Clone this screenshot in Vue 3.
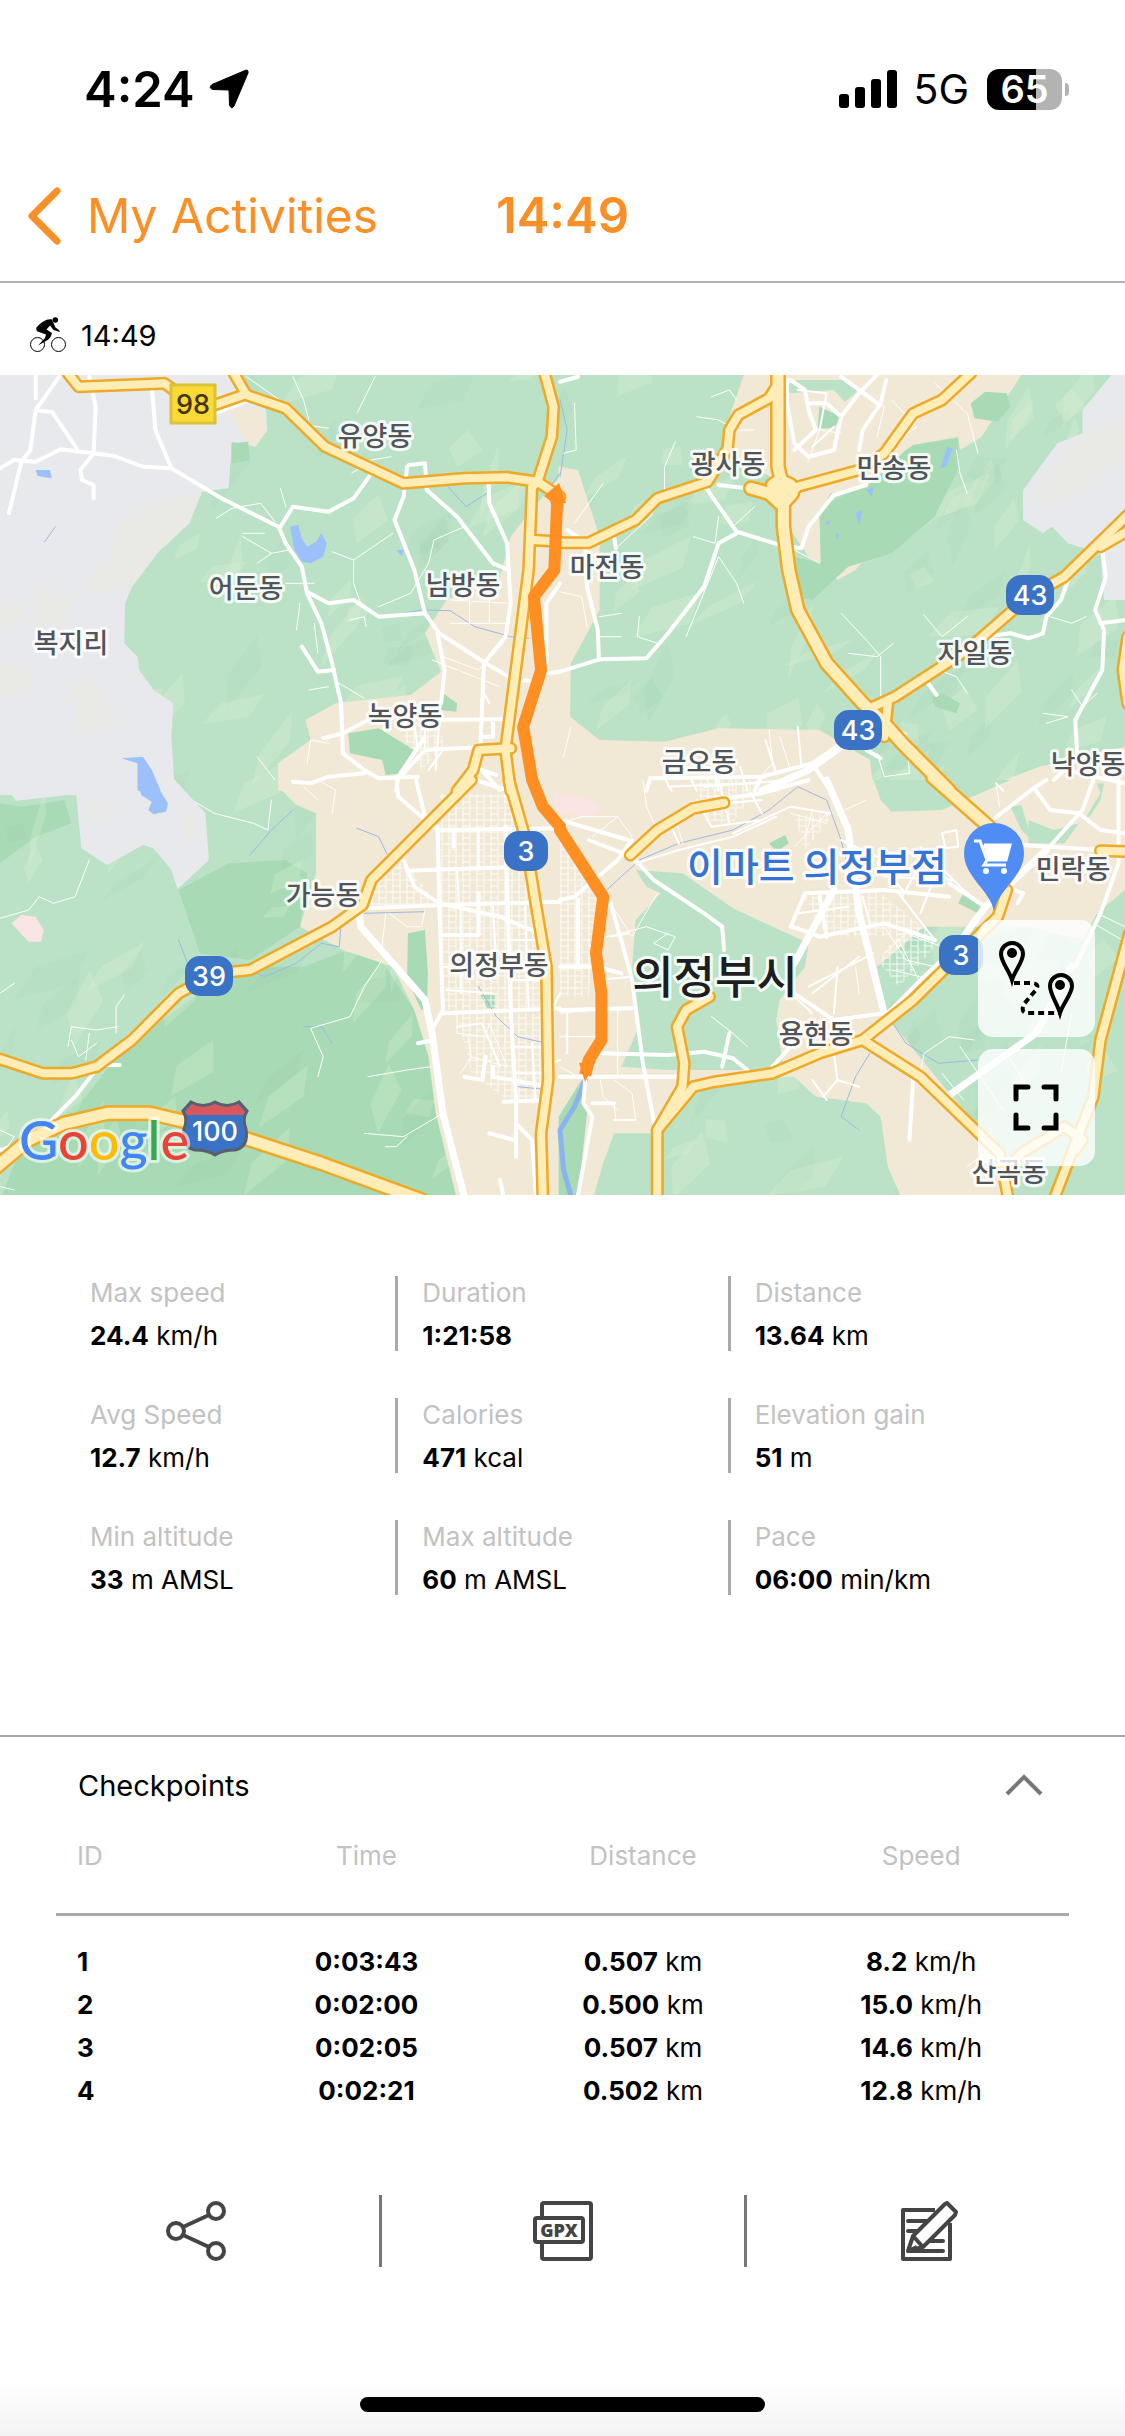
<script setup>
import { ref } from 'vue'

const open = ref(true)

const stats = [
  { label: 'Max speed', value: '24.4', unit: 'km/h' },
  { label: 'Duration', value: '1:21:58', unit: '' },
  { label: 'Distance', value: '13.64', unit: 'km' },
  { label: 'Avg Speed', value: '12.7', unit: 'km/h' },
  { label: 'Calories', value: '471', unit: 'kcal' },
  { label: 'Elevation gain', value: '51', unit: 'm' },
  { label: 'Min altitude', value: '33', unit: 'm AMSL' },
  { label: 'Max altitude', value: '60', unit: 'm AMSL' },
  { label: 'Pace', value: '06:00', unit: 'min/km' },
]

const checkpoints = [
  { id: 1, time: '0:03:43', distance: '0.507', speed: '8.2' },
  { id: 2, time: '0:02:00', distance: '0.500', speed: '15.0' },
  { id: 3, time: '0:02:05', distance: '0.507', speed: '14.6' },
  { id: 4, time: '0:02:21', distance: '0.502', speed: '12.8' },
]

// Map geometry is stored per tile; each tile has its own origin and scale.
const tiles = {
  nw: { x: 0, y: -5, sx: 2.8, sy: 3 },
  ne: { x: 560, y: -5, sx: 2.775, sy: 3 },
  sw: { x: 0, y: 405, sx: 2.8, sy: 3 },
  se: { x: 560, y: 405, sx: 2.775, sy: 3 },
}

function project(layer) {
  const out = []
  for (const key of Object.keys(layer)) {
    const t = tiles[key]
    for (const line of layer[key]) {
      const n = line.split(' ').map(Number)
      const pts = []
      for (let i = 0; i < n.length; i += 2) {
        pts.push((t.x + n[i] / t.sx).toFixed(1) + ',' + (t.y + n[i + 1] / t.sy).toFixed(1))
      }
      out.push(pts.join(' '))
    }
  }
  return out
}

const forest = project({
  sw: ['240 950 350 800 560 640 720 560 850 560 960 515 1060 530 1160 690 1200 800 1290 1260 0 1260 60 1100', '0 70 60 80 180 60 200 130 100 170 0 250', '500 330 640 250 800 240 860 280 840 440 700 540 560 520'],
})

const rock = project({
  nw: ['0 0 640 0 745 120 748 180 715 230 650 215 640 355 565 365 530 460 440 550 370 650 350 700 348 820 385 860 390 900 430 960 485 1000 480 1100 490 1275 0 1275'],
  sw: ['0 0 490 0 575 100 585 240 497 328 480 270 430 205 400 195 300 255 228 205 213 42 45 62'],
  ne: ['1568 15 1530 15 1450 120 1450 190 1380 220 1285 360 1285 450 1340 490 1365 470 1410 520 1500 550 1510 690 1568 690'],
})

const rockShade = project({
  nw: ['565 365 530 460 440 550 370 650 300 670 230 660 300 560 340 450 420 400', '0 880 90 890 90 970 0 980', '100 640 200 690 180 760 90 770', '200 940 260 920 330 1060 220 1100', '0 700 60 690 70 740 0 780'],
  ne: ['1450 190 1568 150 1568 260 1400 400 1300 400'],
  sw: ['500 60 560 140 520 210', '240 60 330 80 260 130'],
})

const town = project({
  nw: ['1568 1262 780 1262 778 1180 870 1110 855 1050 940 1000 1150 975 1235 905 1190 790 1250 690 1400 620 1430 500 1480 430 1568 320', '640 120 730 110 748 180 715 230 690 215'],
  sw: ['778 0 1570 0 1570 1260 1280 1260 1220 1000 1200 830 1160 690 1100 560 960 510 840 440 885 280 885 100 830 75 780 20'],
  ne: ['0 290 50 300 110 500 110 720 30 880 28 1040 110 1110 290 1115 440 1075 720 1080 860 1170 870 1262 -4 1262 -4 290', '510 15 1280 15 1170 200 1110 240 1105 200 980 225 850 350 750 370 720 440 724 580 690 560 640 480 600 330 450 240 470 140', '1160 1262 1330 1190 1568 1130 1568 1262', '755 610 790 580 850 560 820 600 770 630'],
  se: ['-4 0 1568 0 1568 330 1490 400 1450 480 1300 440 1010 440 880 560 900 700 930 740 1080 940 1250 1200 1240 1260 950 1260 910 1160 890 1010 850 970 710 950 650 890 400 900 270 1060 150 1060 120 1150 90 1260 -4 1260'],
})

const park = project({
  ne: ['620 50 660 30 800 30 825 65 790 95 760 60 640 70'],
  se: ['210 270 340 280 480 385 690 490 680 560 610 660 600 720 620 860 560 870 300 870 170 860 215 750 200 560 210 420 280 340 240 320', '870 0 890 60 920 95 1060 90 1250 0', '1300 120 1370 150 1440 130 1400 190 1300 190', '1250 80 1280 75 1310 180 1280 150', '1460 110 1500 40 1490 10 1510 10 1500 60 1470 110'],
})

const grove = project({
  nw: ['975 1090 1060 1075 1160 1140 1130 1210 1080 1215 1070 1170 980 1150', '648 220 695 215 700 270 650 280', '1240 970 1280 1000 1278 1025 1235 1020'],
  ne: ['980 225 1105 205 1108 290 1040 440 920 550 800 590 700 690 660 680 650 560 724 580 720 420 760 390 860 340 960 240', '1140 100 1180 65 1240 70 1250 110 1215 155 1150 145', '720 110 780 140 760 175 715 175', '1030 980 1060 970 1110 1000 1100 1030 1040 1010'],
  sw: ['1142 460 1190 450 1198 580 1195 690 1180 690 1140 600', '1345 645 1385 645 1385 685 1365 685'],
  se: ['-4 1010 60 900 75 1000 50 1250 -4 1250', '580 190 625 165 635 190 600 215', '1120 340 1170 370 1160 400 1105 370'],
})

const blush = project({
  sw: ['32 430 60 405 100 410 122 450 115 485 80 485'],
  se: ['-20 40 70 50 110 80 90 110 -10 100'],
})

const water = project({
  nw: ['812 470 835 465 845 505 860 530 885 515 900 490 915 520 905 560 870 580 845 575 825 540', '340 1165 400 1160 425 1200 450 1262 385 1262 385 1180', '100 300 140 300 145 325 105 318', '1110 540 1130 540 1125 560'],
  sw: ['385 0 430 0 470 70 465 95 430 103 415 90 425 65 395 45'],
  ne: ['1075 230 1090 235 1070 290 1055 295', '820 430 840 420 830 465', '765 490 775 490 770 510', '850 360 870 350 865 380', '735 460 750 450 745 465', '925 340 910 365 920 350'],
})

const streams = project({
  nw: ['1255 350 1305 410 1370 365', '1080 740 1180 720 1260 722 1330 770 1430 800 1480 805', '1568 310 1540 350', '125 515 155 470'],
  ne: ['0 90 20 180 0 320'],
  sw: ['1000 145 1060 170 1085 225', '955 430 950 500 900 490 830 550 740 590 680 560', '500 480 525 550', '1340 620 1390 710 1450 770 1530 790', '700 225 760 150 820 90', '850 740 900 740 930 790', '1450 920 1540 930', '1190 395 1020 400'],
  se: ['130 330 220 240 330 190 480 150 580 90 660 20 740 60 780 180 830 400 870 560 900 690 960 790 1050 850 1160 840', '860 820 820 890 780 1010 830 1050'],
})

const canal = project({
  se: ['70 900 40 980 0 1050 10 1170 30 1245'],
})

const lanes = project({
  nw: ['690 20 790 95 860 165 920 175', '820 20 850 90 865 150', '1050 20 1000 130', '605 445 650 415 730 400 770 455', '785 355 800 410', '680 490 740 490', '680 500 760 550 720 580', '760 550 810 540', '930 545 990 570 990 640 1010 700', '990 570 1100 490', '800 640 880 640', '840 700 830 780', '880 760 890 850', '950 940 1020 985', '865 960 920 950', '1300 470 1215 510 1200 580 1150 670 1060 710', '985 310 1040 270 1095 260', '1240 860 1340 900 1410 820', '1260 690 1425 700', '1260 760 1425 760', '1315 680 1315 760', '1370 690 1370 760', '1210 870 1400 950', '980 750 1020 740 1025 770', '720 1160 770 1230', '860 1180 870 1110 920 1120'],
  ne: ['290 370 290 290 320 215', '160 530 250 440 260 420', '380 140 440 150 490 180 540 180', '420 80 470 60 490 90', '350 800 440 560 490 640 510 700', '370 500 430 520 440 440', '780 730 850 810 890 860 890 990', '800 850 880 860 925 820', '1010 735 1060 800 1130 740', '1360 740 1420 760 1460 740', '1050 900 1100 920 1130 970', '110 740 170 730', '105 800 170 800', '220 740 215 800 270 820', '0 665 60 680 75 770', '690 270 720 180 780 190', '840 60 900 110 880 200', '920 90 990 170 950 200', '1040 40 1090 90 1130 130 1160 250', '1100 240 1110 310 1130 370', '1420 960 1450 1010 1490 970', '1340 1030 1410 1040 1350 1060', '900 1070 960 1090 970 1210 900 1220 880 1150', '580 1080 590 1180 540 1240', '610 1100 640 1200', '470 1200 480 1262', '400 1220 430 1262', '10 1160 30 1070', '650 540 720 580', '540 410 510 440 480 470', '10 250 45 240 40 100', '40 460 120 340'],
  sw: ['0 415 80 390 110 350 150 370 210 350 250 240', '545 65 600 100 710 130 750 150 760 60', '325 760 325 680 348 645', '190 800 200 740 270 750 330 740', '200 780 220 830 270 790', '240 840 250 760', '0 640 40 610', '1070 540 1020 620 980 710 870 745 905 830 890 890', '1205 860 1140 870 1030 890', '1240 1000 1130 1070 1020 1060', '1140 1070 1110 1100 1080 1100', '890 0 940 30 930 100', '850 20 890 60', '1080 400 1070 500', '1190 390 1180 440 1140 440 1090 400', '1250 630 1380 640', '1280 700 1280 760 1360 770 1370 730 1420 860 1320 830 1290 880', '1320 830 1310 770', '0 1050 40 1070 20 1100', '0 1220 40 1230'],
  se: ['420 710 480 760 520 800', '0 130 60 110 160 110 200 170', '90 170 160 110', '230 0 240 80 270 150', '320 110 340 190', '0 770 110 770', '0 700 200 680', '0 860 50 890', '160 680 160 890', '140 370 200 470 270 340', '130 470 240 440 320 470 300 510 260 490 300 460', '750 90 650 200', '640 100 740 130', '700 90 680 180', '820 560 830 640', '900 440 960 540 1040 560', '900 520 960 460 1060 500', '920 570 1000 590', '940 480 1000 610', '1210 10 1220 80', '1000 880 1010 820 1080 770 1150 780', '1060 880 1120 960', '1110 800 1230 990', '150 970 155 1020 210 1020 200 940 150 900', '110 890 120 950 160 990', '1240 820 1290 910', '1420 700 1390 880', '1130 1160 1200 1100', '1480 430 1560 480', '1490 400 1568 440', '790 90 850 60'],
})

const streets = project({
  nw: ['0 295 40 270 100 275 170 238 260 250 320 258 400 290 480 295 620 385 780 470 800 520 845 590 860 670 900 760 930 880 955 1000 960 1150 1020 1200 1060 1225 1170 1220', '170 14 100 120 85 240 60 275 25 430', '100 14 100 85', '250 20 268 110 262 250 225 300 230 330 262 345 262 385', '425 50 435 180 480 295', '105 122 145 125 215 235', '600 130 700 90', '1040 310 990 385 920 425 820 410 785 470', '860 665 920 700 990 690 1060 740 1190 730', '1145 285 1190 280 1195 360 1280 440 1380 580 1425 600', '1140 290 1130 380 1105 450 1160 600 1190 730 1230 790 1360 880 1440 930 1480 932', '1368 340 1370 400 1420 520 1430 700 1415 800 1355 880 1345 1130', '1225 790 1245 900 1235 1000', '845 830 890 905 935 900', '905 1105 960 1090 1040 1045', '820 1235 870 1240 920 1220 1020 1210', '1180 1050 1415 1048', '1130 1210 1190 1140 1340 1132', '1340 1190 1400 1260', '1345 1200 1390 1215', '1110 1262 1115 1220 1190 1100', '1568 640 1530 700 1530 900', '1380 1060 1380 1100 1345 1100', '1530 910 1568 905'],
  sw: ['1020 385 1240 375 1568 365', '1225 140 1230 370 1240 690 1215 740', '1110 0 1115 50 1225 150 1568 145', '1140 272 1420 262', '1415 140 1430 690 1445 960 1445 1130', '1240 700 1568 685', '1130 240 1160 320 1230 370 1400 410 1510 460', '1165 0 1190 110', '1240 465 1340 465 1340 340', '1410 965 1540 960', '0 1110 70 1090', '145 1020 210 950 280 855 335 855', '1170 790 1215 780', '1445 1030 1490 1080 1500 1240', '1370 1060 1440 1080', '1300 890 1350 900 1360 830', '1330 0 1420 30', '1270 150 1270 200', '1380 860 1380 890 1540 920', '1400 1200 1410 1250'],
  ne: ['400 345 490 485 610 525 670 535 690 470 760 375 850 345', '440 345 600 365', '490 490 440 520 400 650 300 790 240 865 110 868 0 905', '70 530 75 650 105 780 108 865', '20 480 70 515', '150 500 155 535', '630 30 630 100 650 220 690 260 760 240 780 140 830 70 880 14', '905 30 890 100 840 180 830 240', '690 100 740 100 780 140', '640 30 680 60 690 120 710 180 650 240', '780 20 880 100', '1505 540 1515 620 1485 720 1510 780 1505 900 1430 1050 1435 1150', '1500 760 1568 750', '1410 630 1390 690 1350 740 1340 790 1300 805 1250 790 1180 800', '780 1120 700 1180 560 1220 250 1225 240 1262', '1015 930 1045 975', '0 35 50 20', '850 1140 890 1165', '700 1180 750 1262', '560 1220 540 1262', '1370 1230 1400 1200 1568 1240'],
  se: ['0 360 40 350 160 240 200 180', '80 180 200 230 260 300 400 400 450 440 455 510', '140 370 170 480 200 600 230 850 265 1050', '370 70 560 40 690 0', '0 890 350 890', '110 820 300 825 400 815 480 835 520 870', '0 560 100 560 170 580', '0 690 200 685', '650 640 760 720 900 700', '1280 195 1500 210', '1350 210 1450 90 1480 0', '1200 120 1320 20 1350 0', '1320 30 1360 90 1440 100 1500 150 1568 160', '1550 0 1550 250 1500 400 1430 560', '640 440 680 340 900 330 1080 350', '645 440 720 470 900 430 1040 480', '720 350 740 470', '980 890 970 1080', '70 900 65 970 90 1010 50 1245', '90 970 150 970', '590 860 640 800', '450 860 470 760', '1080 310 1180 380 1150 420', '190 180 0 120', '900 710 1010 590 1100 500', '50 360 50 560', '1260 330 1285 340 1270 370'],
})

// Secondary town streets, thinner than the through streets.
const blocks = project({
  se: ['380 60 420 140 560 120', '440 0 470 130', '530 40 560 100', '400 20 640 0', '460 70 560 60', '480 160 640 80 750 100', '300 120 330 190', '210 250 330 210 480 170 600 110', '880 250 960 340', '1000 250 950 350', '1040 290 1000 400', '900 290 1090 300', '700 640 830 530', '690 620 870 520', '770 560 760 700', '700 900 740 960', '760 820 770 900 730 950', '770 900 830 920', '840 350 860 430', '660 400 800 380', '780 180 900 240 960 210 1080 300', '1000 200 1120 330 1180 380', '1060 160 1100 150 1105 200 1070 205 1060 160', '600 590 640 640 700 700', '20 700 20 820', '100 600 200 590', '190 460 140 470', '210 1020 150 1020', '940 340 1040 480'],
  sw: ['1250 630 1380 640', '1240 560 1420 560', '1290 380 1290 640', '1380 380 1390 560', '1340 150 1340 265', '1430 480 1530 480', '1430 600 1530 600', '1430 800 1530 800', '1440 880 1530 880', '1490 790 1500 960', '1470 380 1480 680', '1280 740 1350 730 1400 860', '1540 700 1568 640', '1540 850 1568 840', '1280 270 1285 370'],
  nw: ['1190 1050 1190 1140', '1230 1050 1220 1200', '1160 1060 1170 1140', '1350 960 1370 1000', '1200 1200 1240 1140'],
  ne: ['290 1225 310 1262', '360 1220 380 1262', '420 1170 440 1262', '500 1190 520 1262', '300 1250 520 1240', '570 1110 600 1210', '660 1070 670 1190', '660 60 740 70 720 180', '700 230 760 170', '1230 1262 1210 1240', '1480 1230 1470 1262'],
})

const avenues = project({
  sw: ['1005 385 1010 440 1100 550 1190 660 1210 760 1240 1000 1300 1250'],
  ne: ['800 1115 690 1200 560 1262'],
  se: ['740 0 800 150 830 400 900 700', '1075 950 1320 760 1420 560', '1120 470 1180 380 1350 210', '650 550 760 330'],
})

const highways = project({
  nw: ['190 10 220 50 420 42 460 40 500 70', '600 105 690 72', '655 10 690 75 800 115 910 230 1130 340 1300 325 1420 322 1505 335 1568 380', '1525 10 1550 110 1545 200 1505 335 1490 350 1480 600 1450 850 1415 1140 1430 1262', '1495 510 1568 515', '1430 1135 1340 1140 1325 1200 1280 1262'],
  sw: ['1320 0 1040 300 1015 375 930 440 700 570 650 575 570 600 500 640 370 780 270 860 200 880 120 880 -20 830', '1425 0 1470 170 1500 370 1530 560 1535 900 1515 1060 1520 1260'],
  ne: ['-10 518 80 518 210 450 270 385 410 335 465 235 470 180 495 135 580 85 600 50', '640 370 660 350 830 300 900 250 980 130 1060 90 1140 10', '870 1010 930 980 1130 840 1300 680 1400 620 1580 430', '1500 530 1580 480', '900 1100 910 1000', '1575 800 1562 900 1575 1000'],
  se: ['1240 330 1215 410 1130 500 980 660 840 780 720 820 590 880 430 905 370 920 270 1050 270 1260', '415 650 350 690 325 740 345 850 340 920 270 1050', '840 780 1000 890 1220 1120 1245 1260', '195 225 270 150 370 85 455 68', '1500 212 1580 215', '1580 460 1500 780 1480 950 1370 1260', '1230 1180 1280 1120 1400 1040 1450 1080 1430 1110'],
})

const expressway = project({
  ne: ['605 10 605 290 620 360 620 470 635 600 660 720 740 880 840 1000 900 1060 950 1120 1080 1262', '530 355 580 370 610 400', '610 330 590 345 600 375 620 400 645 370 640 345 610 330'],
  sw: ['-20 1170 80 1080 180 1030 300 1000 420 1000 600 1045 900 1150 1180 1260'],
  se: ['1035 -8 1190 140'],
})

const route = project({
  nw: ['1552 370 1560 400 1552 600 1495 680 1515 900 1465 1070 1490 1230'],
  sw: ['1490 0 1520 80 1568 140'],
  se: ['0 150 120 350 100 520 115 640 115 780 80 840 70 885'],
}).join(' ')

const grids = project({
  nw: ['1110 1060 1220 1060 1250 1130 1180 1200'],
  sw: ['1230 40 1420 40 1480 200 1520 690 1240 690', '1280 700 1530 700 1530 980 1420 960 1320 880', '1030 330 1130 240 1220 370 1040 380'],
  se: ['0 160 100 360 80 650 0 650', '380 0 560 0 480 130 400 120', '670 340 880 330 1040 470 740 470', '880 540 960 440 1050 490 940 620', '650 110 760 100 680 210'],
})

// Hill shading: small slanted facets from a fixed seed.
const facets = []
let seed = 7
const rand = () => (seed = (seed * 16807) % 2147483647) / 2147483647
for (let i = 0; i < 300; i++) {
  const x = rand() * 1125
  const y = rand() * 820
  const l = 12 + rand() * 32
  const w = 5 + rand() * 12
  const a = -0.3 - rand() * 1.1
  const c = Math.cos(a)
  const s = Math.sin(a)
  facets.push({
    light: rand() > 0.45,
    points: [[-l, 0], [-l / 4, -w], [l, -w / 3], [l / 3, w]]
      .map(([u, v]) => (x + u * c - v * s).toFixed(1) + ',' + (y + u * s + v * c).toFixed(1))
      .join(' '),
  })
}

const places = [
  { name: '유양동', x: 375, y: 61 },
  { name: '어둔동', x: 246, y: 213 },
  { name: '복지리', x: 71, y: 268 },
  { name: '남방동', x: 463, y: 210 },
  { name: '녹양동', x: 405, y: 341 },
  { name: '광사동', x: 728, y: 89 },
  { name: '만송동', x: 894, y: 93 },
  { name: '마전동', x: 607, y: 192 },
  { name: '자일동', x: 975, y: 278 },
  { name: '금오동', x: 699, y: 387 },
  { name: '낙양동', x: 1088, y: 389 },
  { name: '가능동', x: 323, y: 520 },
  { name: '의정부동', x: 499, y: 590 },
  { name: '민락동', x: 1073, y: 494 },
  { name: '용현동', x: 816, y: 659 },
  { name: '산곡동', x: 1009, y: 797 },
]

const shields = [
  { no: '43', x: 1030, y: 220 },
  { no: '43', x: 858, y: 355 },
  { no: '3', x: 526, y: 476 },
  { no: '39', x: 209, y: 601 },
  { no: '3', x: 961, y: 580 },
]
</script>

<template>
  <main class="screen">
    <div class="status">
      <div class="status-left">
        <span class="clock">4:24</span>
        <svg class="locate" viewBox="0 0 40 40" aria-hidden="true">
          <path d="M36 1.500 Q39.500 0 39 4 L25 37 Q22.500 41 20.500 36 L20 21 L4 20.500 Q-1 19 3 15.500 Z" fill="#000" stroke="#000" stroke-width="1" />
        </svg>
      </div>
      <div class="status-right">
        <svg class="signal" viewBox="0 0 58 38" aria-hidden="true">
          <rect x="0" y="24" width="10" height="14" rx="3" />
          <rect x="16" y="17" width="10" height="21" rx="3" />
          <rect x="32" y="9" width="10" height="29" rx="3" />
          <rect x="48" y="0" width="10" height="38" rx="3" />
        </svg>
        <span class="network">5G</span>
        <span class="battery"><span class="level">65</span><i class="nub"></i></span>
      </div>
    </div>

    <header class="nav">
      <button class="back" type="button">
        <svg viewBox="0 0 34 58" aria-hidden="true"><path d="M30 4 L5 29 L30 54" fill="none" stroke="currentColor" stroke-width="7" stroke-linecap="round" stroke-linejoin="round" /></svg>
        <span>My Activities</span>
      </button>
      <h1>14:49</h1>
    </header>

    <div class="activity">
      <svg viewBox="0 0 36 36" aria-hidden="true">
        <g fill="none" stroke="#000" stroke-width="1"><circle cx="7.500" cy="27.500" r="7" /><circle cx="28.500" cy="27.500" r="7" /></g>
        <circle cx="25.300" cy="3" r="2.800" />
        <path d="M22 2.500 C17 1.500 12 4.500 6.500 10.500 C5.500 13 7 14.500 9 15 L16 17.500 L15 21 L8 28.500 L18.500 22.500 C21 20.500 21.500 17.500 22 16 L16.500 12.500 L20 8.500 L23.500 13 L30 15 L29 13 L25.500 10.500 Z" />
      </svg>
      <span>14:49</span>
    </div>

    <section class="map" aria-label="Route map">
      <svg class="canvas" viewBox="0 0 1125 820">
        <defs>
          <pattern id="blocks" width="14" height="12" patternUnits="userSpaceOnUse">
            <path d="M0 1 H14 M1 0 V12 M8 1 V12 M0 7 H8" stroke="#fff" stroke-width="1" fill="none" opacity=".8" />
          </pattern>
        </defs>
        <rect width="1125" height="820" fill="#bbe2c6" />
        <polygon v-for="p in forest" :key="p" :points="p" fill="#a8dab5" />
        <polygon v-for="(f, i) in facets" :key="i" :points="f.points" :class="f.light ? 'facet-light' : 'facet-dark'" />
        <polygon v-for="p in rock" :key="p" :points="p" fill="#e8e9ed" />
        <polygon v-for="p in rockShade" :key="p" :points="p" fill="#e9eae6" />
        <polygon v-for="p in town" :key="p" :points="p" fill="#f1e9d6" />
        <polygon v-for="p in park" :key="p" :points="p" fill="#bbe2c6" />
        <polygon v-for="p in grove" :key="p" :points="p" fill="#a8dab5" />
        <polygon v-for="p in blush" :key="p" :points="p" fill="#fbe4e4" />
        <polygon v-for="p in water" :key="p" :points="p" fill="#9cc0f9" />
        <polygon v-for="p in grids" :key="p" :points="p" fill="url(#blocks)" />
        <g class="line">
          <polyline v-for="p in streams" :key="p" :points="p" stroke="#9cb8e8" stroke-width="1" />
          <polyline v-for="p in canal" :key="p" :points="p" stroke="#8ab4f0" stroke-width="5" />
          <polyline v-for="p in lanes" :key="p" :points="p" stroke="#fff" stroke-width="1" />
          <polyline v-for="p in blocks" :key="p" :points="p" stroke="#fff" stroke-width="2" />
          <polyline v-for="p in streets" :key="p" :points="p" stroke="#fff" stroke-width="4" />
          <polyline v-for="p in avenues" :key="p" :points="p" stroke="#fff" stroke-width="7" />
          <polyline v-for="p in highways" :key="p" :points="p" stroke="#eeaa26" stroke-width="13" />
          <polyline v-for="p in expressway" :key="p" :points="p" stroke="#eeaa26" stroke-width="16" />
          <polyline v-for="p in highways" :key="p" :points="p" stroke="#ffedb8" stroke-width="8" />
          <polyline v-for="p in expressway" :key="p" :points="p" stroke="#ffedb8" stroke-width="11" />
          <polyline :points="route" stroke="#ff8f22" stroke-width="12" stroke-linecap="butt" />
        </g>
        <path d="M544 121 L559 108 L566 128 L553 128 Z M579 688 L585 707 L596 686 Z" fill="#ff8f22" />

        <text v-for="p in places" :key="p.name" class="place" :x="p.x" :y="p.y + 10">{{ p.name }}</text>
        <text class="city" x="715" y="619">의정부시</text>
        <text class="poi" x="817" y="506">이마트 의정부점</text>

        <rect x="171" y="10" width="44" height="38" fill="#fbd936" stroke="#dcc234" stroke-width="3" />
        <text class="road-no dark" x="193" y="39">98</text>
        <g v-for="s in shields" :key="s.no + s.x">
          <rect :x="s.x - (s.no.length > 1 ? 24 : 22)" :y="s.y - 20" :width="s.no.length > 1 ? 48 : 44" height="40" rx="15" fill="#3a73c6" />
          <text class="road-no" :x="s.x" :y="s.y + 10">{{ s.no }}</text>
        </g>
        <path d="M191 727 Q203 734 215 727 Q227 734 239 727 L247 736 Q242 744 246 754 Q249 772 235 775 Q222 775 215 780 Q208 775 195 775 Q181 772 184 754 Q188 744 183 736 Z" fill="#3a73c6" stroke="#5b5f6b" stroke-width="3" />
        <path d="M192 729 Q203 735 215 729 Q227 735 238 729 L245 737 L243 740 H187 L185 737 Z" fill="#d8575c" />
        <text class="road-no" x="215" y="766">100</text>

        <path d="M994 536 C990 515 964 502 964 478 A30 30 0 0 1 1024 478 C1024 502 998 515 994 536 Z" fill="#4f8df5" />
        <path d="M974 466 H980 L987 485 H1006 L1010 470 H984 M987 485 L984 490 H1006" fill="none" stroke="#fff" stroke-width="3" />
        <path d="M983 470 H1010 L1006 484 H988 Z" fill="#fff" />
        <circle cx="986" cy="496" r="3" fill="#fff" /><circle cx="1004" cy="496" r="3" fill="#fff" />

        <text class="logo" x="19" y="785"><tspan fill="#4285f4">G</tspan><tspan fill="#ea4335">o</tspan><tspan fill="#fbbc05">o</tspan><tspan fill="#4285f4">g</tspan><tspan fill="#34a853">l</tspan><tspan fill="#ea4335">e</tspan></text>
      </svg>

      <div class="tools">
        <button type="button" aria-label="Show route">
          <svg viewBox="0 0 117 117" fill="none" stroke="#000" stroke-width="4">
            <path d="M34 60 C31 50 23 42 23 34 A11 11 0 0 1 45 34 C45 42 37 50 34 60 Z" />
            <path d="M82 93 C79 83 72 74 72 66 A11 11 0 0 1 94 66 C94 74 85 83 82 93 Z" />
            <circle cx="34" cy="33" r="3" fill="#000" /><circle cx="82" cy="65" r="3" fill="#000" />
            <path d="M36 63 H54 Q63 64 57 71 L46 84 Q42 93 50 93 H82" stroke-dasharray="6 4" />
          </svg>
        </button>
        <button type="button" aria-label="Full screen">
          <svg viewBox="0 0 117 117" fill="none" stroke="#000" stroke-width="5" stroke-linecap="round">
            <path d="M50 38 H38 V50 M66 38 H78 V50 M38 66 V79 H50 M78 66 V79 H66" />
          </svg>
        </button>
      </div>
    </section>

    <dl class="stats">
      <div v-for="s in stats" :key="s.label" class="stat">
        <dt>{{ s.label }}</dt>
        <dd><b>{{ s.value }}</b> {{ s.unit }}</dd>
      </div>
    </dl>

    <section class="checkpoints">
      <button class="toggle" type="button" :aria-expanded="open" @click="open = !open">
        <span>Checkpoints</span>
        <svg viewBox="0 0 38 22" aria-hidden="true"><path d="M2 20 L19 3 L36 20" fill="none" stroke="#777" stroke-width="4" /></svg>
      </button>
      <table v-if="open">
        <thead>
          <tr><th>ID</th><th>Time</th><th>Distance</th><th>Speed</th></tr>
        </thead>
        <tbody>
          <tr v-for="c in checkpoints" :key="c.id">
            <td><b>{{ c.id }}</b></td>
            <td><b>{{ c.time }}</b></td>
            <td><b>{{ c.distance }}</b> km</td>
            <td><b>{{ c.speed }}</b> km/h</td>
          </tr>
        </tbody>
      </table>
    </section>

    <footer class="actions">
      <button type="button" aria-label="Share">
        <svg viewBox="0 0 60 60" fill="none" stroke="#444" stroke-width="4">
          <circle cx="10" cy="30" r="8" /><circle cx="50" cy="10" r="8" /><circle cx="50" cy="50" r="8" />
          <path d="M17 26 L43 14 M17 34 L43 46" />
        </svg>
      </button>
      <button type="button" aria-label="Export GPX">
        <svg viewBox="0 0 60 60" fill="none" stroke="#444" stroke-width="4">
          <path d="M9 16 V4 Q9 2 11 2 H56 Q58 2 58 4 V56 Q58 58 56 58 H11 Q9 58 9 56 V43" />
          <rect x="2" y="17" width="48" height="24" rx="2" />
          <text class="gpx" x="26" y="36">GPX</text>
        </svg>
      </button>
      <button type="button" aria-label="Edit">
        <svg viewBox="0 0 60 60" fill="none" stroke="#444" stroke-width="4" stroke-linejoin="round">
          <path d="M36 9 H4 V58 H51 V22" />
          <path d="M9 20 H28 M9 30 H20 M30 40 H44 M10 50 H44" stroke-linecap="round" />
          <path d="M46 3 L48 2 L57 11 L56 14 L24 46 L9 50 L14 35 Z" fill="#fff" />
          <path d="M14 35 L24 46 M9 50 L18 46" />
        </svg>
      </button>
    </footer>

    <div class="home"><span></span></div>
  </main>
</template>

<style>
body {
  margin: 0;
  background: #fff;
}
</style>

<style scoped>
.screen {
  display: flex;
  flex-direction: column;
  min-height: 100vh;
  background: #fff;
  color: #000;
  font-family: Inter, "Noto Sans CJK KR", sans-serif;
  font-size: 26px;
}

button {
  border: 0;
  padding: 0;
  background: none;
  font: inherit;
  color: inherit;
}

svg {
  display: block;
}

.status {
  display: flex;
  align-items: center;
  justify-content: space-between;
  box-sizing: border-box;
  height: 150px;
  padding: 28px 63px 0 84px;
}

.status-left,
.status-right {
  display: flex;
  align-items: center;
}

.clock {
  font-size: 49px;
  font-weight: 600;
}

.locate {
  width: 40px;
  height: 40px;
  margin-left: 14px;
}

.signal {
  width: 58px;
  height: 38px;
}

.network {
  margin-left: 16px;
  font-size: 41px;
}

.battery {
  position: relative;
  margin-left: 18px;
  width: 75px;
  height: 41px;
  border-radius: 12px;
  background: linear-gradient(90deg, #000 65%, #b3b3b3 65%);
}

.level {
  display: block;
  color: #fff;
  font-size: 38px;
  font-weight: 600;
  line-height: 41px;
  text-align: center;
}

.nub {
  position: absolute;
  right: -7px;
  top: 14px;
  width: 4px;
  height: 13px;
  border-radius: 0 6px 6px 0;
  background: #b3b3b3;
}

.nav {
  display: grid;
  grid-template-columns: 1fr auto 1fr;
  align-items: center;
  height: 131px;
  padding: 0 27px;
  border-bottom: 2px solid #b3b3b3;
  color: #f98f27;
}

.back {
  display: flex;
  align-items: center;
  gap: 26px;
  font-size: 48px;
  white-space: nowrap;
}

.back svg {
  width: 34px;
  height: 58px;
}

.nav h1 {
  margin: 0;
  font-size: 49px;
  font-weight: 600;
}

.activity {
  display: flex;
  align-items: center;
  gap: 15px;
  box-sizing: border-box;
  height: 92px;
  padding: 12px 30px 0;
  font-size: 29px;
}

.activity svg {
  width: 36px;
  height: 36px;
}

.map {
  position: relative;
}

.canvas {
  width: 100%;
  height: auto;
}

.facet-light {
  fill: #e2f2d9;
  opacity: .25;
}

.facet-dark {
  fill: #7fb596;
  opacity: .07;
}

.line {
  fill: none;
  stroke-linejoin: round;
  stroke-linecap: round;
}

.place,
.city,
.poi,
.logo {
  font-family: "Noto Sans CJK KR", sans-serif;
  text-anchor: middle;
  paint-order: stroke;
  stroke: rgba(255, 255, 255, .85);
  stroke-width: 6px;
  stroke-linejoin: round;
}

.place {
  fill: #50545b;
  font-size: 27px;
  font-weight: 500;
}

.city {
  fill: #1c1e21;
  font-size: 45px;
  font-weight: 500;
}

.poi {
  fill: #3474d4;
  font-size: 39px;
  font-weight: 500;
}

.road-no {
  fill: #fff;
  font-size: 27px;
  font-weight: 500;
  text-anchor: middle;
}

.road-no.dark {
  fill: #42340c;
}

.logo {
  font-family: Lato, sans-serif;
  font-size: 54px;
  font-weight: 500;
  text-anchor: start;
  stroke: rgba(255, 255, 255, .6);
}

.tools {
  position: absolute;
  right: 30px;
  bottom: 29px;
  display: grid;
  gap: 12px;
}

.tools button {
  border-radius: 15px;
  background: rgba(255, 255, 255, .8);
}

.tools svg {
  width: 117px;
  height: 117px;
}

.stats {
  display: grid;
  grid-template-columns: repeat(3, 1fr);
  row-gap: 47px;
  margin: 0;
  padding: 81px 65px 140px 63px;
}

.stat {
  display: grid;
  gap: 11px;
  padding-left: 24px;
  border-left: 3px solid #a9a9a9;
  line-height: 32px;
}

.stat:nth-child(3n + 1) {
  border-left-color: transparent;
}

dt,
th {
  color: #c2c2c2;
  font-weight: 400;
}

dd {
  margin: 0;
}

dt,
dd {
  padding-top: 1px;
  margin-bottom: -1px;
}

.checkpoints {
  border-top: 2px solid #a9a9a9;
}

.toggle {
  display: flex;
  align-items: center;
  justify-content: space-between;
  width: 100%;
  height: 96px;
  padding: 0 82px 0 78px;
  font-size: 29px;
}

.toggle svg {
  width: 38px;
  height: 22px;
}

table {
  width: calc(100% - 112px);
  margin: 0 56px;
  border-collapse: collapse;
  table-layout: fixed;
  line-height: 43px;
  text-align: center;
}

th,
td {
  padding: 0;
}

th {
  width: 27.3%;
  padding: 1px 0 36px;
  border-bottom: 3px solid #a9a9a9;
}

th:first-child,
td:first-child {
  width: 17%;
  padding-left: 21px;
  box-sizing: border-box;
  text-align: left;
}

th:last-child,
td:last-child {
  width: auto;
  padding-right: 8px;
}

tbody tr:first-child td {
  padding-top: 24px;
}

.actions {
  display: grid;
  grid-template-columns: repeat(3, 1fr);
  margin-top: 83px;
  padding: 0 15px 0 13px;
}

.actions button {
  display: flex;
  align-items: center;
  justify-content: center;
  height: 72px;
}

.actions button + button {
  border-left: 3px solid #777;
}

.actions svg {
  width: 60px;
  height: 60px;
}

.gpx {
  fill: #444;
  stroke: none;
  font-family: "Open Sans", sans-serif;
  font-size: 18px;
  font-weight: 800;
  text-anchor: middle;
}

.home {
  display: flex;
  justify-content: center;
  margin-top: auto;
  padding: 18px 0 24px;
  background: linear-gradient(#fff, #f3f3f3);
}

.home span {
  width: 36%;
  height: 15px;
  border-radius: 8px;
  background: #000;
}
</style>
